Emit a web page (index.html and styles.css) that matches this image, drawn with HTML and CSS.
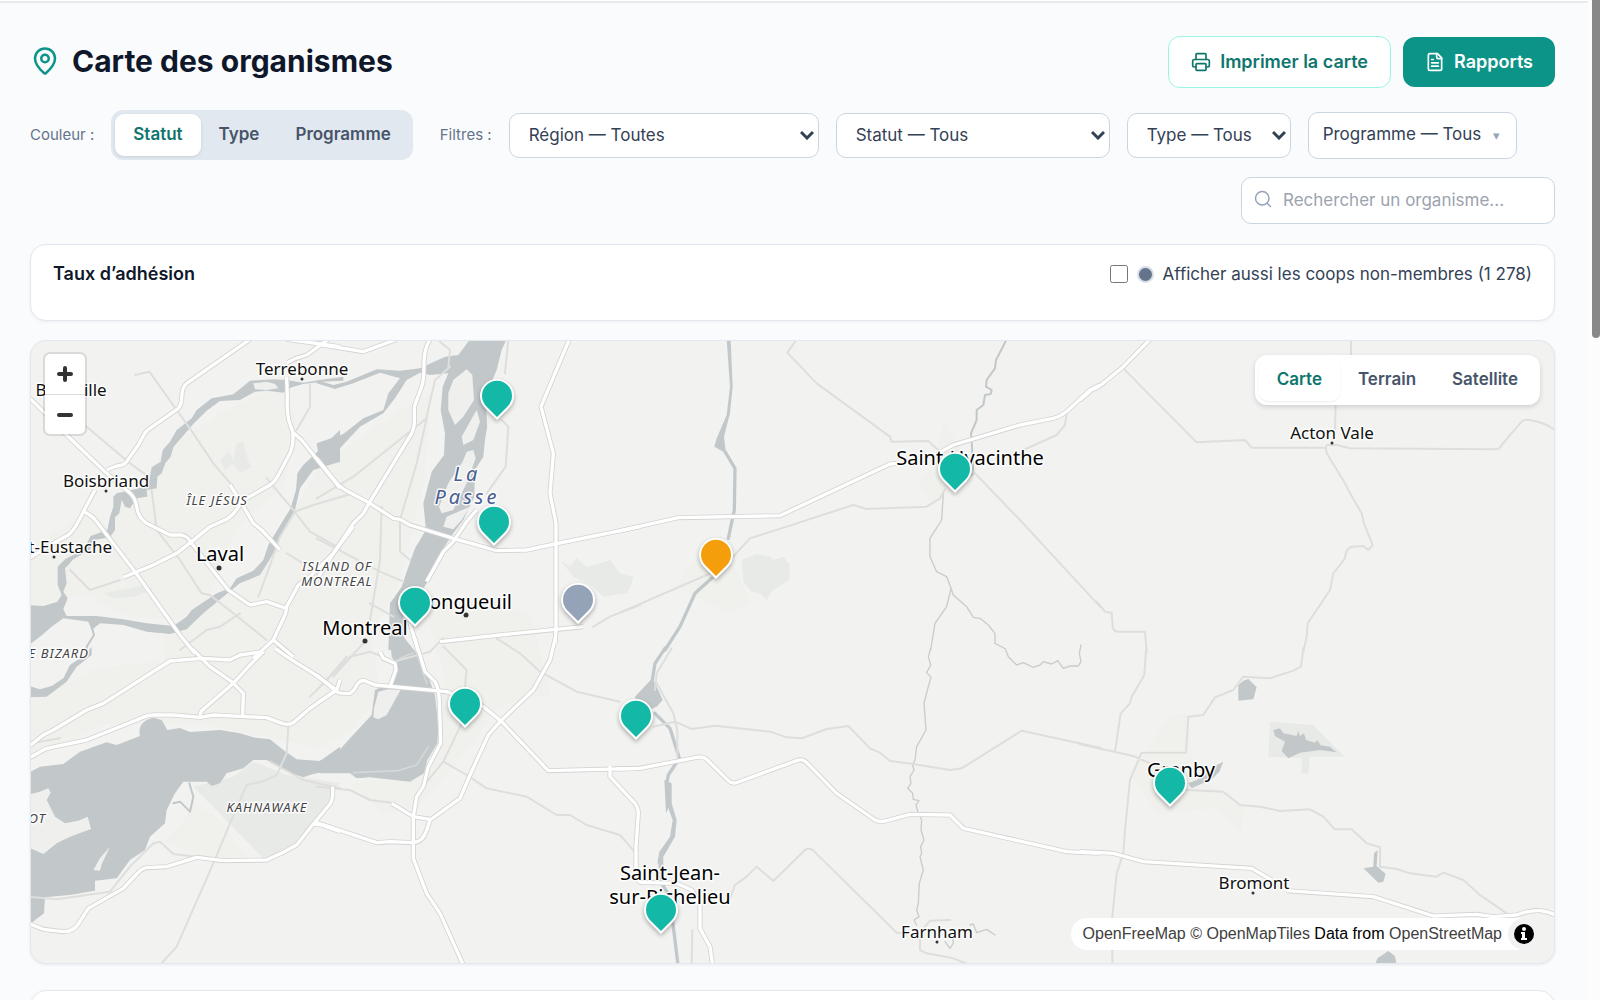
FILE: index.html
```html
<!DOCTYPE html>
<html lang="fr">
<head>
<meta charset="utf-8">
<meta name="viewport" content="width=device-width, initial-scale=1">
<title>Carte des organismes</title>
<link rel="stylesheet" href="styles.css">
</head>
<body>
<header class="topbar"></header>
<main class="page">
  <div class="page-head">
    <h1 class="title">
      <svg class="title-icon" viewBox="0 0 24 24" aria-hidden="true"><path d="M20 10c0 4.993-5.539 10.193-7.399 11.799a1 1 0 0 1-1.202 0C9.539 20.193 4 14.993 4 10a8 8 0 0 1 16 0"/><circle cx="12" cy="10" r="3"/></svg>
      Carte des organismes
    </h1>
    <div class="actions">
      <button type="button" class="btn btn-outline">
        <svg class="btn-icon" viewBox="0 0 24 24" aria-hidden="true"><path d="M6 18H4a2 2 0 0 1-2-2v-5a2 2 0 0 1 2-2h16a2 2 0 0 1 2 2v5a2 2 0 0 1-2 2h-2"/><path d="M6 9V3a1 1 0 0 1 1-1h10a1 1 0 0 1 1 1v6"/><rect x="6" y="14" width="12" height="8" rx="1"/></svg>
        Imprimer la carte
      </button>
      <button type="button" class="btn btn-primary">
        <svg class="btn-icon" viewBox="0 0 24 24" aria-hidden="true"><path d="M15 2H6a2 2 0 0 0-2 2v16a2 2 0 0 0 2 2h12a2 2 0 0 0 2-2V7Z"/><path d="M14 2v4a2 2 0 0 0 2 2h4"/><path d="M10 9H8M16 13H8M16 17H8"/></svg>
        Rapports
      </button>
    </div>
  </div>

  <div class="toolbar">
    <div class="group">
      <span class="group-label">Couleur :</span>
      <div class="segmented">
        <button type="button" class="segment is-active">Statut</button>
        <button type="button" class="segment">Type</button>
        <button type="button" class="segment">Programme</button>
      </div>
    </div>
    <div class="group">
      <span class="group-label">Filtres :</span>
      <select class="select select-region" aria-label="Région"><option>Région — Toutes</option></select>
      <select class="select select-status" aria-label="Statut"><option>Statut — Tous</option></select>
      <select class="select select-type" aria-label="Type"><option>Type — Tous</option></select>
      <button type="button" class="dropdown">Programme — Tous <span class="caret">▾</span></button>
    </div>
    <label class="search">
      <svg class="search-icon" viewBox="0 0 24 24" aria-hidden="true"><circle cx="11" cy="11" r="9"/><path d="m22 22-4-4"/></svg>
      <input class="search-input" type="search" placeholder="Rechercher un organisme..." aria-label="Rechercher un organisme">
    </label>
  </div>

  <section class="card rate">
    <h2 class="card-title">Taux d’adhésion</h2>
    <label class="toggle">
      <input type="checkbox" class="check">
      <span class="dot"></span>
      Afficher aussi les coops non-membres (1 278)
    </label>
  </section>

  <section class="map" aria-label="Carte">
    <svg class="map-canvas" viewBox="0 0 1523 622" preserveAspectRatio="xMinYMin slice">
      <defs>
        <g id="highways">
          <g transform="translate(-33 -33)">
            <path d="M20 195L70 245L140 315L260 430L325 485Q345 500 350 530Q355 565 380 580L450 615L485 615Q505 620 515 640L570 710L625 780L690 825L740 815L798 835"/>
            <path d="M690 28L500 160Q488 172 486 190Q486 225 475 235L380 302Q370 315 355 345L320 395Q310 407 290 408L260 420M225 480L190 545Q165 600 145 615L100 640L20 690"/>
            <path d="M190 545Q215 555 230 575L345 725L480 915L525 970"/>
            <path d="M310 742L400 705L470 670L515 635L570 590L620 568Q645 550 655 530L680 505L750 465Q765 455 775 435L812 365Q822 340 818 305L806 270Q800 240 802 200L800 140M802 98Q830 82 860 75L925 28"/>
            <path d="M820 308L845 330L900 400L960 475"/>
            <path d="M630 465L665 520L700 580L725 600L780 660"/>
            <path d="M800 28L960 50"/>
            <path d="M1000 590L940 670L870 740L835 765L800 830L797 850L760 930L700 985M760 930L820 980"/>
          </g>
          <g transform="translate(867 -33)">
            <path d="M-10 385L55 465L75 480L150 520L220 565L240 568L270 585L400 625L530 662L620 660L705 642L960 590"/>
            <path d="M-10 42L130 65L230 28"/>
            <path d="M-10 750L40 670L100 580L130 550L150 515L275 310Q285 290 283 270L283 230L305 170Q312 150 312 110Q310 60 330 28"/>
            <path d="M705 940L708 900L708 580L690 490L700 370L663 230L748 28"/>
            <path d="M470 540L440 575L400 635L370 665L320 755"/>
            <path d="M270 880L295 965"/>
            <path d="M360 935L540 915L790 890"/>
          </g>
          <g transform="translate(-33 927)">
            <path d="M515 -5L570 50L635 95L670 130L668 195"/>
            <path d="M765 -5L800 20L880 70L950 120"/>
            <path d="M730 5L660 15L630 30L545 25L450 33L250 160L200 180L100 240L70 255L20 295"/>
            <path d="M730 5L690 45L640 100L550 178Q540 185 540 200"/>
            <path d="M20 328L80 295L200 270L350 210Q380 195 400 195L460 195L540 202L580 195L740 203Q765 212 780 218Q805 228 820 218L870 175L950 120"/>
            <path d="M938 410Q940 450 930 462L880 522L830 585L790 607L740 630L610 632L530 622L440 650L380 653Q365 655 350 672L310 715L205 775L175 822Q160 845 130 845L70 838L20 818"/>
            <path d="M880 522L905 525L960 545"/>
          </g>
          <g transform="translate(867 897)">
            <path d="M-10 548L170 608L210 605L280 608Q310 605 320 570L330 540L420 475L450 405L505 285L540 245L640 150L690 60L707 -10"/>
            <path d="M215 490L280 530L330 538"/>
            <path d="M283 -10L315 95L345 125Q355 140 358 180L362 310L325 380L310 440L290 470L280 530L280 655L320 760L360 820L430 975"/>
            <path d="M-10 105L50 155Q60 162 90 160Q105 150 110 135Q125 115 140 125L165 135L380 155L490 200L545 245L685 392L960 385"/>
            <path d="M180 35L190 55L225 70L228 90L210 140M-10 190L50 150L60 120"/>
            <path d="M870 378L870 410L940 485Q955 500 955 520L948 620L948 680"/>
          </g>
          <g transform="translate(1767 -33)">
            <path d="M-10 605L175 563L480 557L810 402L835 400M960 367L1000 345L1200 285L1300 265Q1325 258 1345 240L1410 180L1440 165"/>
          </g>
          <g transform="translate(1767 927)">
            <path d="M-10 357L60 355L230 322Q250 318 262 330L325 392Q338 404 355 396L530 332Q548 325 560 338L650 430L765 510Q780 518 800 512L870 493L990 495L1030 535L1340 605L1440 610"/>
            <path d="M48 640Q48 690 60 697L170 700L215 720L240 760L240 835L270 890L278 945"/>
          </g>
          <g transform="translate(3147 -33)">
            <path d="M0 210L35 180Q60 170 75 155L130 110L210 28"/>
          </g>
          <g transform="translate(3147 927)">
            <path d="M0 605L50 607L100 610L190 635L515 655L575 690M620 722L880 740L1060 798L1190 793L1240 800L1310 795Q1350 780 1380 782Q1410 785 1430 798"/>
          </g>
        </g>
      </defs>
      <g transform="scale(.33333)">
        <g class="urban">
          <path d="M0 620L180 500L230 560L400 330L560 220L760 120L800 260L760 430L620 560L500 840L300 830L160 760L0 800Z"/>
          <path d="M400 880L640 730L760 560L860 380L1100 210L1200 160L1180 420L1100 740L1020 880L1050 1060L960 1170L870 1220L500 1150L220 1150L0 1260V1080L200 980L400 960Z"/>
          <path d="M1180 800L1320 760L1500 820L1560 1060L1400 1100L1300 1240L1160 1400L1060 1420L960 1330L1200 1280L1240 1000Z"/>
          <path d="M480 1380L560 1430L650 1550L540 1560L400 1500L460 1440Z"/>
          <path d="M3380 1180L3420 1120H3470L3480 1240L3520 1320L3640 1400L3630 1480L3560 1400L3380 1420L3300 1300Z"/>
          <path d="M2700 380L2740 240L2790 320L2830 420L2780 440L2700 480L2660 420Z"/>
          <path d="M1970 680L2060 600L2120 700L2160 780L2100 820L1940 740Z"/>
        </g>
        <g class="parks">
          <path transform="translate(-33 927)" d="M520 410L640 380L700 335L800 375L960 400L935 420L940 450L880 520L830 590L730 625Z"/>
          <path transform="translate(1767 -33)" d="M365 690L410 672L450 680L460 690L490 680L510 705L507 750L455 785L440 810L420 790L395 785L370 755Z"/>
          <path transform="translate(867 -33)" d="M720 690L750 710L770 685L800 710L840 700L870 690L900 730L940 740L932 770L920 790L850 800L820 770L760 740Z"/>
          <path transform="translate(3147 927)" d="M570 215L700 225L795 320L690 320L685 372L665 370L665 325L565 320Z"/>
          <path transform="translate(-33 -33)" d="M600 390L625 365L640 390L650 340L670 335L685 395L695 410L660 430L640 400L615 420ZM250 790L380 765L400 780L340 800L280 805Z"/>
        </g>
        <g class="water">
          <g transform="translate(-33 -33)">
            <path d="M970 152L905 155L850 162L815 172L790 188L740 182L705 185L660 210L600 213L560 242L520 282L500 305L470 340L460 352L452 380L436 400L425 430L412 440L410 475L380 480L382 500L350 505L330 535L315 530L305 510L298 550L285 562L285 600L270 622L220 630L210 660L160 688L145 705L135 715L140 760L130 785L143 805L130 838L140 858L230 858L310 868L380 880L460 888L500 860L515 840L560 810L590 790L630 775L650 745L700 722L730 690L745 645L790 570L812 535L828 480L832 430L850 405L960 300L960 395L880 420L840 475L825 540L790 600L765 660L745 695L720 735L660 760L610 800L550 850L500 898L450 912L380 905L310 885L240 880L215 900L205 875L130 865L95 890L60 920L20 950V825L70 828L112 815L125 795L113 765L113 710L135 688L190 660L212 618L262 600L270 560L280 530L280 500L290 490L345 478L385 465L395 412L422 395L428 360L450 335L470 300L515 265L530 240L575 205L640 193L690 152L760 148L800 150L850 158L900 150L970 140Z"/>
            <path class="stroke-thin" d="M215 890L222 915L200 950L202 965"/>
          </g>
          <g transform="translate(867 -33)">
            <path d="M-10 150L40 165L80 155L170 118L240 122L300 115L375 80L415 75L450 28H560L545 60L530 120L500 190L505 270L495 330L490 380L465 420L463 500L430 570L400 610L370 655L330 745L300 790L265 820L250 860L255 960H205L210 820L245 770L262 720L285 655L318 600L310 520L335 425L372 375L375 310L362 240L368 170L385 130L330 135L300 128L260 150L225 205L190 250L120 290L60 355L0 400L-10 340L70 312L130 265L190 240L205 190L240 145L180 128L100 160L45 177L-10 160Z"/>
          </g>
          <g transform="translate(-33 927)">
            <path d="M20 372L60 350L130 342L180 305L260 277L290 285L360 258Q350 215 400 203L425 210L442 240L480 234L510 246L600 240L660 250L700 262L750 268L790 300L830 328L900 333L960 290V356L880 372L850 382L800 365L740 330L700 330L670 355L620 370L600 400L575 408L560 395L490 395L465 430L440 480L435 520L390 560L375 600L330 630L290 685L225 692L225 722L150 735L75 742L72 790L20 830Z"/>
            <path d="M20 105L60 118L95 108L130 85L150 45L195 15L215 -10V15L170 50L140 95L80 140L20 142Z"/>
            <path class="stroke-thin" d="M508 400L520 440L510 485L480 455L460 460"/>
          </g>
          <g transform="translate(867 897)">
            <path d="M210 -10H250L290 40L325 110L345 165L355 260L352 310L322 360L312 400L270 425L150 412L110 415L90 400L0 400V362L50 340L90 295L155 225L165 150L225 120L230 75L215 50Z"/>
          </g>
          <g transform="translate(1767 -33)">
            <path d="M320 28H332L338 170L330 250L312 320L318 370L283 350L290 325L320 255L330 170Z"/>
            <path class="stroke-wide" d="M315 365L345 415L343 540L325 625M275 745L225 790L180 890L135 960"/>
            <path class="stroke-thin" d="M1160 28L1128 90L1125 115L1100 150L1098 170L1115 180L1112 192L1095 195L1090 225L1070 240L1070 270L1053 310L1056 350L1060 430L1040 450"/>
            <path class="stroke-hair" d="M970 490L965 570L930 625L930 680L950 725L980 740L993 775L980 830L945 880L932 960M993 775L1000 795L1040 830L1060 862L1080 865L1105 885L1125 910L1125 940L1157 957"/>
          </g>
          <g transform="translate(1767 927)">
            <path class="stroke-wide" d="M135 -5L105 40L97 90M105 190L150 235L178 325L145 375L140 400"/>
            <path d="M97 85L45 140L60 190L110 170L128 150L115 120ZM133 390L155 400L155 460L170 510L165 560L130 620V645L112 640L118 605L150 560L158 510L145 475L138 490Z"/>
            <path class="stroke-wide" d="M120 640L125 700L150 740L160 830L174 945"/>
            <path class="stroke-hair" d="M932 -5L925 20L932 45L920 68L933 82L922 120L912 160L918 240L890 290L885 330L878 345L882 360L870 380L873 400L863 415L878 430L880 448L897 452L888 465L895 490L905 510L903 540L912 570L902 590L905 610L900 620L910 660L898 700L895 760L890 780L897 800L882 810L890 825M1157 0L1165 20L1190 45L1210 38L1240 52L1260 45L1270 35L1295 42L1313 32L1330 55L1350 48L1375 48L1383 35L1378 10L1383 -15M1050 825L1060 822L1070 848L1100 838L1125 855M975 875L990 895L1000 880L998 865"/>
          </g>
          <g transform="translate(3147 927)">
            <path d="M475 105L490 92L505 87L530 112L520 148L475 152ZM580 240L600 235L610 250L650 258L655 243L660 258L672 250L678 270L705 278L712 270L722 286L750 290L770 307L720 300L660 308L625 325L605 303L615 275L585 258ZM850 655L880 650L882 610L893 600L890 648L917 672L910 695L895 698ZM885 945L892 925L925 903L945 918L950 945ZM325 400L350 390L370 378L410 345L430 335L418 365L395 388L335 415Z"/>
          </g>
        </g>
        <g class="islands">
          <path transform="translate(867 -33)" d="M400 150L440 118L457 135L462 210L430 260L405 285L385 240L385 190ZM425 320L450 275L470 240L480 275L460 330L430 345ZM428 395L440 365L460 360L467 385L440 460L400 540L365 550L357 530L385 460ZM370 590L380 560L450 530L425 570L400 598ZM498 215L510 200L510 270L502 300Z"/>
          <path transform="translate(-33 -33)" d="M700 160L740 155L765 162L775 175L740 180L705 178Z"/>
          <path transform="translate(-33 927)" d="M20 435L60 425L85 415L92 428L80 450L105 500L135 520L175 512L203 500L213 537L150 560L110 580L70 612L20 590ZM220 660L240 625L270 590L245 642L240 662Z"/>
          <path transform="translate(867 897)" d="M175 155L205 148L242 150L225 180L200 225L175 238L160 232L162 205Z"/>
        </g>
        <path class="pier" transform="translate(867 897)" d="M100 398L235 392L290 375L325 320M290 40L320 130M240 55L280 38"/>
        <g class="minor">
          <g transform="translate(-33 -33)">
            <path d="M345 135L388 125L470 240L520 310L580 400L640 470M740 445L820 540L870 605L960 655M150 720L210 780L300 750M570 795L640 850L740 930M1000 490L880 525L825 545L780 620L745 720L715 800M395 480L410 600L480 690L545 790L570 795M870 165L870 230L830 300M200 290L330 400L385 440M800 670L850 700M480 960L560 900L600 890L660 850"/>
          </g>
          <g transform="translate(867 -33)">
            <path d="M-10 505L100 440L320 265M565 28L555 130M545 270L565 290L557 410L500 490M320 265L290 400L240 570L240 665L270 690M390 110L345 150L320 260M185 530L180 690L150 870M-10 625L180 725L250 755M820 890L870 860L960 825M150 820L220 860M360 35L390 60L385 110"/>
          </g>
          <g transform="translate(-33 927)">
            <path d="M420 945L470 890L580 640L630 520L680 405L735 392L770 375L800 310L805 230M20 740L110 748L270 725L330 650L400 580L420 575L460 612L530 620M750 335L850 390L960 415M980 20L920 90L870 140M35 280L120 265"/>
          </g>
          <g transform="translate(867 897)">
            <path d="M370 20L440 90L435 140M430 240L370 365L300 450M370 365L440 405L500 445L620 470L710 525L750 525L800 555L900 585L948 640M530 -5L600 40L660 95L770 155L900 185M-10 440L90 450L150 480L215 488M-10 150L90 50L150 35L220 65L330 35L370 -5M40 110L130 10"/>
          </g>
          <g transform="translate(1767 -33)">
            <path d="M0 848L260 735L330 690L390 625L500 590L700 525L740 537L920 530L960 505L975 478M530 28L502 68L590 160L810 320L815 335L925 333L960 365M1060 425L1200 570L1440 830M1340 250L1335 285L1310 315L1210 360"/>
          </g>
          <g transform="translate(1767 927)">
            <path d="M100 230L165 215L215 237L285 227L450 245L500 262L545 265L620 237L685 228L750 295L780 308L810 333L880 342L990 360L1025 355L1205 242L1440 293M330 745L345 705L380 680L410 650L460 693L555 600Q570 592 580 602L830 848L860 850M215 945L217 840M900 860L900 900L920 910L1000 925L1050 945M990 810L930 812L915 830M110 100L160 190L172 240L172 320M155 -5L110 70L105 120"/>
          </g>
          <g transform="translate(3147 -33)">
            <path d="M130 115L350 337L495 330L515 353L738 353L740 345L770 345L810 355L1245 358Q1260 358 1265 345L1325 275Q1335 265 1360 272Q1400 280 1425 300M813 28L813 75M767 225L765 300M738 353L740 370L795 460L805 480L845 550L852 580L878 645L865 660L850 648L815 650Q797 655 795 685L760 730L750 780L683 880L680 920L670 965M50 815L75 845L95 848L98 890Q100 905 115 905L195 905L200 965"/>
          </g>
          <g transform="translate(3147 927)">
            <path d="M198 0L193 75L155 140L150 160L122 190L105 305M670 -5L663 50L640 62L570 85L490 80L460 120L405 142L370 195L325 200L318 308L185 308L150 390L135 540L130 610L110 670L97 800L97 945M0 283L160 318L210 340M320 420L430 425L480 465L540 470L600 483L690 478L730 500L765 538L815 538L860 580L900 592L900 650L950 657L990 670L1070 680L1090 668L1150 690L1200 735L1280 790"/>
          </g>
        </g>
        <use href="#highways" class="casing"/>
        <use href="#highways" class="surface"/>
      </g>
      <g class="town-dots">
        <circle cx="271" cy="38" r="1.5"/><circle cx="75" cy="150" r="1.5"/><circle cx="23" cy="216" r="1.5"/>
        <circle cx="188" cy="227" r="2.5"/><circle cx="334" cy="300" r="2.5"/><circle cx="435" cy="274" r="2.5"/>
        <circle cx="1301" cy="102" r="1.5"/><circle cx="1222" cy="552" r="1.5"/><circle cx="906" cy="601" r="1.5"/>
      </g>
      <g class="labels">
        <text class="town" x="271" y="34">Terrebonne</text>
        <text class="town" x="40" y="55">Blainville</text>
        <text class="town" x="75" y="146">Boisbriand</text>
        <text class="town at-end" x="81" y="212">Saint-Eustache</text>
        <text class="town" x="1301" y="98">Acton Vale</text>
        <text class="town" x="1223" y="548">Bromont</text>
        <text class="town" x="906" y="597">Farnham</text>
        <text class="city" x="189" y="220">Laval</text>
        <text class="city" x="334" y="294">Montreal</text>
        <text class="city at-end" x="481" y="268">Longueuil</text>
        <text class="city" x="939" y="124">Saint-Hyacinthe</text>
        <text class="city" x="1150" y="436">Granby</text>
        <text class="city" x="639" y="539">Saint-Jean-</text>
        <text class="city" x="639" y="563">sur-Richelieu</text>
        <text class="area" x="186" y="164">ÎLE JÉSUS</text>
        <text class="area" x="306" y="230">ISLAND OF</text>
        <text class="area" x="306" y="245">MONTREAL</text>
        <text class="area at-end" x="58" y="317">ÎLE BIZARD</text>
        <text class="area" x="236" y="471">KAHNAWAKE</text>
        <text class="area at-end" x="15" y="482">ÎLE PERROT</text>
        <text class="river" x="436" y="140">La</text>
        <text class="river" x="436" y="163">Passe</text>
      </g>
      <defs>
        <path id="pin" d="M17 41L5 29A17 17 0 1 1 29 29Z"/>
        <path id="pin-fill" d="M17 38L6 27A15 15 0 1 1 28 27Z"/>
      </defs>
    </svg>

    <button type="button" class="pin member" style="left:449px;top:38px" aria-label="Organisme 1"><svg viewBox="0 0 34 41"><use href="#pin" class="pin-rim"/><use href="#pin-fill"/></svg></button>
    <button type="button" class="pin member" style="left:446px;top:164px" aria-label="Organisme 2"><svg viewBox="0 0 34 41"><use href="#pin" class="pin-rim"/><use href="#pin-fill"/></svg></button>
    <button type="button" class="pin member" style="left:367px;top:245px" aria-label="Organisme 3"><svg viewBox="0 0 34 41"><use href="#pin" class="pin-rim"/><use href="#pin-fill"/></svg></button>
    <button type="button" class="pin inactive" style="left:530px;top:242px" aria-label="Organisme 4"><svg viewBox="0 0 34 41"><use href="#pin" class="pin-rim"/><use href="#pin-fill"/></svg></button>
    <button type="button" class="pin pending" style="left:668px;top:197px" aria-label="Organisme 5"><svg viewBox="0 0 34 41"><use href="#pin" class="pin-rim"/><use href="#pin-fill"/></svg></button>
    <button type="button" class="pin member" style="left:907px;top:111px" aria-label="Organisme 6"><svg viewBox="0 0 34 41"><use href="#pin" class="pin-rim"/><use href="#pin-fill"/></svg></button>
    <button type="button" class="pin member" style="left:417px;top:346px" aria-label="Organisme 7"><svg viewBox="0 0 34 41"><use href="#pin" class="pin-rim"/><use href="#pin-fill"/></svg></button>
    <button type="button" class="pin member" style="left:588px;top:358px" aria-label="Organisme 8"><svg viewBox="0 0 34 41"><use href="#pin" class="pin-rim"/><use href="#pin-fill"/></svg></button>
    <button type="button" class="pin member" style="left:613px;top:552px" aria-label="Organisme 9"><svg viewBox="0 0 34 41"><use href="#pin" class="pin-rim"/><use href="#pin-fill"/></svg></button>
    <button type="button" class="pin member" style="left:1122px;top:425px" aria-label="Organisme 10"><svg viewBox="0 0 34 41"><use href="#pin" class="pin-rim"/><use href="#pin-fill"/></svg></button>

    <div class="zoom">
      <button type="button" class="zoom-btn" aria-label="Zoom avant"><svg viewBox="0 0 20 20"><path d="M10 4v12M4 10h12"/></svg></button>
      <button type="button" class="zoom-btn" aria-label="Zoom arrière"><svg viewBox="0 0 20 20"><path d="M4 10h12"/></svg></button>
    </div>

    <div class="segmented layers">
      <button type="button" class="segment is-active">Carte</button>
      <button type="button" class="segment">Terrain</button>
      <button type="button" class="segment">Satellite</button>
    </div>

    <div class="attribution">
      <span><a href="#">OpenFreeMap</a> <a href="#">© OpenMapTiles</a> Data from <a href="#">OpenStreetMap</a></span>
      <button type="button" class="info" aria-label="Attribution"><svg viewBox="0 0 20 20"><circle cx="10" cy="10" r="10"/><path class="info-mark" d="M7 8h4v6h2v2H7v-2h1v-4H7ZM10 3a2 2 0 1 1 0 4a2 2 0 1 1 0-4Z"/></svg></button>
    </div>
  </section>

  <section class="card next"></section>
</main>
<div class="scrollbar"><div class="thumb"></div></div>
</body>
</html>
```
FILE: styles.css
```css
* { box-sizing: border-box; }

body {
  margin: 0;
  height: 100vh;
  overflow: hidden;
  background: #fafbfd;
  color: #334155;
  font-family: Inter, "Liberation Sans", sans-serif;
  font-size: 17px;
  line-height: 24px;
}

button, input, select { font: inherit; color: inherit; margin: 0; }
button { cursor: pointer; }
svg { display: block; }

.topbar { height: 3px; margin-right: 12px; background: #fff; border-bottom: 2px solid #e8ebee; }

.page { padding: 33px 45px 0 30px; display: flex; flex-direction: column; }

.page-head { display: flex; align-items: center; justify-content: space-between; margin-bottom: 22px; }
.title {
  margin: 0;
  padding-bottom: 2px;
  display: flex;
  align-items: center;
  gap: 12px;
  font-size: 30px;
  line-height: 40px;
  font-weight: 700;
  color: #0f172a;
}
.title-icon, .btn-icon, .search-icon {
  fill: none;
  stroke: currentColor;
  stroke-width: 2;
  stroke-linecap: round;
  stroke-linejoin: round;
}
.title-icon { width: 30px; height: 30px; color: #0d9488; }

.actions { display: flex; align-items: center; gap: 12px; }
.btn {
  display: flex;
  align-items: center;
  gap: 9px;
  height: 50px;
  padding: 0 22px;
  border: 0;
  border-radius: 12px;
  font-size: 18px;
  font-weight: 600;
}
.btn-icon { width: 20px; height: 20px; }
.btn-outline { height: 52px; background: #fff; border: 1px solid #99f6e4; color: #0f766e; }
.btn-primary { background: #0d9488; color: #fff; }

.toolbar { display: flex; flex-wrap: wrap; align-items: center; gap: 17px 27px; margin-bottom: 20px; }
.group { display: flex; align-items: center; gap: 17px; }
.group-label { font-size: 15px; color: #64748b; }

.segmented { display: flex; padding: 4px; border-radius: 12px; background: #e2e8f0; }
.segment {
  height: 42px;
  padding: 0 18px 2px;
  border: 0;
  border-radius: 9px;
  background: transparent;
  color: #475569;
  font-weight: 600;
}
.segment.is-active { background: #fff; color: #0f766e; box-shadow: 0 1px 3px rgba(15, 23, 42, .12); }

.select, .dropdown, .search-input {
  border: 1px solid #cbd5e1;
  border-radius: 10px;
  background: #fff;
  color: #334155;
}
.select {
  appearance: none;
  height: 45px;
  padding: 0 24px 0 19px;
  background: #fff url("data:image/svg+xml,%3Csvg xmlns='http://www.w3.org/2000/svg' width='14' height='10' fill='none' stroke='%23334155' stroke-width='3'%3E%3Cpath d='M1 2l6 6 6-6'/%3E%3C/svg%3E") no-repeat right 4px center;
}
.select-region { width: 310px; }
.select-status { width: 274px; }
.select-type { width: 164px; }
.dropdown { display: flex; align-items: center; gap: 12px; height: 47px; padding: 0 16px 2px 14px; }
.caret { padding-top: 2px; font-size: 13px; color: #94a3b8; }

.search { position: relative; margin-left: auto; }
.search-icon { position: absolute; left: 13px; top: 13px; width: 18px; height: 18px; color: #94a3b8; }
.search-input { display: block; width: 314px; height: 47px; padding: 0 14px 2px 41px; }
.search-input::placeholder { color: #9ca3af; opacity: 1; }

.card {
  background: #fff;
  border: 1px solid #e2e8f0;
  border-radius: 16px;
  box-shadow: 0 1px 3px rgba(15, 23, 42, .06);
}
.rate { display: flex; justify-content: space-between; align-items: flex-start; height: 77px; padding: 17px 22px; margin-bottom: 19px; }
.card-title { margin: 0; font-size: 18px; line-height: 24px; font-weight: 600; color: #0f172a; }
.toggle { display: flex; align-items: center; gap: 9px; }
.check { width: 18px; height: 18px; }
.dot { width: 17px; height: 17px; border-radius: 50%; background: #64748b; border: 2px solid #d6dee8; }

.map {
  position: relative;
  height: 624px;
  margin-bottom: 26px;
  overflow: hidden;
  border: 1px solid #e2e8f0;
  border-radius: 16px;
  background: #f2f3f1;
  box-shadow: 0 1px 3px rgba(15, 23, 42, .08);
}
.map-canvas { width: 100%; height: 100%; stroke-linejoin: round; stroke-linecap: round; }
.urban { fill: #f0f1ed; }
.parks { fill: #e7eae7; }
.water { fill: #c2c8ca; }
.islands { fill: #eff0ee; }
.stroke-wide { fill: none; stroke: #c2c8ca; stroke-width: 10; }
.stroke-thin { fill: none; stroke: #c2c8ca; stroke-width: 6; }
.stroke-hair { fill: none; stroke: #c8cccc; stroke-width: 4; }
.pier { fill: none; stroke: #d4d8d8; stroke-width: 5; }
.minor { fill: none; stroke: #dededd; stroke-width: 6; }
.casing { fill: none; stroke: #d3d3d2; stroke-width: 15; stroke-linecap: butt; }
.surface { fill: none; stroke: #fff; stroke-width: 10; stroke-linecap: butt; }
.town-dots { fill: #333; }
.labels {
  font-family: "Noto Sans", "DejaVu Sans", sans-serif;
  text-anchor: middle;
  paint-order: stroke;
  stroke: rgba(255, 255, 255, .85);
  stroke-width: 3px;
}
.town { font-size: 17px; fill: #111; }
.city { font-size: 20px; fill: #000; }
.area { font-size: 13px; font-style: italic; letter-spacing: 1px; fill: #444; }
.river { font-size: 20px; font-style: italic; letter-spacing: 3px; fill: #495e91; }
.at-end { text-anchor: end; }

.pin { position: absolute; width: 34px; height: 41px; padding: 0; border: 0; background: none; }
.pin svg { width: 34px; height: 41px; overflow: visible; filter: drop-shadow(0 2px 2px rgba(0, 0, 0, .3)); }
.pin-rim { fill: #fff; }
.member { fill: #14b8a6; }
.inactive { fill: #94a3b8; }
.pending { fill: #f59e0b; }

.zoom {
  position: absolute;
  left: 14px;
  top: 13px;
  width: 40px;
  border-radius: 5px;
  background: #fff;
  box-shadow: 0 0 0 2px rgba(0, 0, 0, .1);
}
.zoom-btn { display: flex; align-items: center; justify-content: center; width: 40px; height: 40px; padding: 0; border: 0; background: none; }
.zoom-btn + .zoom-btn { border-top: 1px solid #ddd; }
.zoom-btn svg { width: 20px; height: 20px; stroke: #333; stroke-width: 4; stroke-linecap: round; }

.layers { position: absolute; right: 14px; top: 14px; background: #fff; box-shadow: 0 2px 5px rgba(15, 23, 42, .16); }
.layers .is-active { box-shadow: 0 1px 2px rgba(15, 23, 42, .08); }

.attribution {
  position: absolute;
  right: 14px;
  bottom: 13px;
  display: flex;
  align-items: center;
  gap: 6px;
  height: 32px;
  padding-left: 12px;
  border-radius: 16px;
  background: #fff;
  color: #000;
  font-family: "Liberation Sans", Arial, sans-serif;
  font-size: 16px;
}
.attribution a { color: #404040; text-decoration: none; }
.info { width: 32px; height: 32px; padding: 6px; border: 0; border-radius: 50%; background: #f2f2f2; }
.info svg { width: 20px; height: 20px; }
.info-mark { fill: #fff; }

.next { height: 90px; }

.scrollbar { position: fixed; top: 0; right: 0; bottom: 0; width: 12px; background: #fcfcfc; }
.thumb { width: 8px; height: 338px; margin-left: 4px; background: #888; border-radius: 0 0 4px 4px; }
```
